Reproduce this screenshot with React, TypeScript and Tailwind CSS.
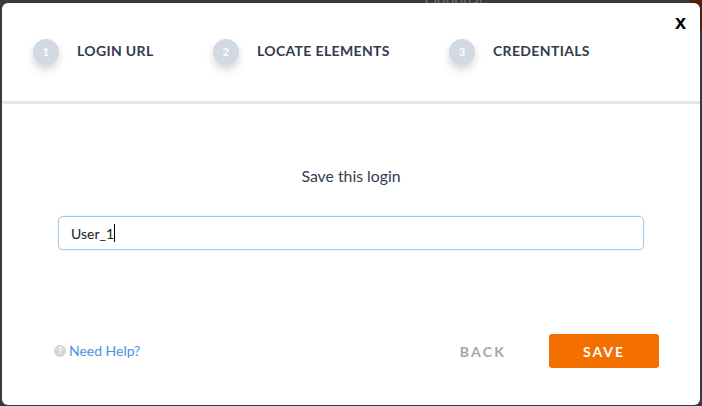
import React from 'react';

const steps = [
  { id: 1, label: 'LOGIN URL', width: 'w-[180px]' },
  { id: 2, label: 'LOCATE ELEMENTS', width: 'w-[236px]' },
  { id: 3, label: 'CREDENTIALS', width: 'w-auto' },
];

const App: React.FC = () => {
  return (
    <div className="relative h-[406px] w-[702px] overflow-hidden bg-[#3a3a3a] pt-[3px] pl-[2px] font-['Lato',sans-serif]">
      {/* Page peeking out behind the modal */}
      <span className="absolute top-[-10px] left-[425px] text-[15px] leading-5 text-[#6e6e6e]">Optional</span>
      <div className="absolute top-0 right-0 h-[30px] w-[13px] bg-[#4a2408]" />

      <div className="relative flex h-[402px] w-[698px] flex-col rounded-[6px] bg-white">
        {/* Close */}
        <button className="absolute top-[9px] right-[14px] font-['Liberation_Sans',sans-serif] text-[20px] leading-5 font-bold text-black">x</button>

        {/* Steps */}
        <div className="flex h-[98px] items-start pt-[36px] pl-[31px]">
          {steps.map(step => (
            <div key={step.id} className={`flex items-start ${step.width}`}>
              <div className="flex h-[26px] w-[26px] items-center justify-center rounded-full bg-[#d1d9e3] text-[11px] font-bold text-white shadow-[0_5px_9px_rgba(0,0,0,0.16)]">
                {step.id}
              </div>
              <span className="ml-[18px] text-[14px] leading-[24px] font-bold tracking-[0.35px] text-[#333c4e]">{step.label}</span>
            </div>
          ))}
        </div>
        <div className="h-[3px] bg-[#e6e6e6]" />

        {/* Body */}
        <div className="flex flex-col items-center pt-[61px]">
          <p className="text-[15.8px] leading-[22px] text-[#333c4e]">Save this login</p>
          <div className="mt-[29px] flex h-[34px] w-[586px] items-center rounded-[5px] border border-[#a5cbe9] bg-white pl-[12px] shadow-[0_0_2px_rgba(120,180,230,0.35)]">
            <span className="text-[14px] text-[#222]">User_1</span>
            <span className="h-[18px] w-px bg-black" />
          </div>
        </div>

        {/* Footer */}
        <div className="mt-[84px] flex items-center pr-[41px] pl-[52px]">
          <svg viewBox="0 0 12 12" className="h-[12px] w-[12px]">
            <circle cx="6" cy="6" r="6" fill="#d6d6d6" />
            <text x="6" y="9.4" textAnchor="middle" fontSize="9.5" fontWeight="900" fill="#fff" fontFamily="Lato, sans-serif">?</text>
          </svg>
          <a className="mb-[1px] ml-[3px] text-[14px] tracking-[-0.02px] text-[#4a90e2]">Need Help?</a>
          <button className="mr-[43px] ml-auto text-[14px] font-bold tracking-[2.2px] text-[#a6a6a6]">BACK</button>
          <button className="h-[34px] w-[110px] rounded-[3px] bg-[#f37000] text-[14px] font-bold tracking-[2px] text-white">SAVE</button>
        </div>
      </div>
    </div>
  );
};

export default App;
